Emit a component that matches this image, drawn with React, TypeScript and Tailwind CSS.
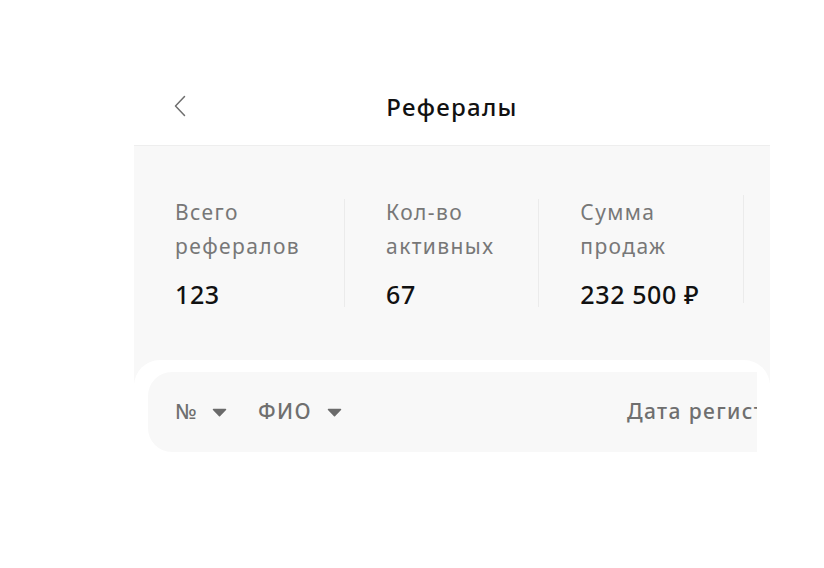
const font = { fontFamily: '"Noto Sans", "Liberation Sans", sans-serif' };

const stats = [
  { label: ['Всего', 'рефералов'], value: '123' },
  { label: ['Кол-во', 'активных'], value: '67' },
  { label: ['Сумма', 'продаж'], value: '232 500 ₽' },
];

function Caret() {
  return (
    <svg width="15" height="9" viewBox="0 0 15 9" className="shrink-0">
      <path d="M1.5 1.5 L13.5 1.5 L7.5 7.8 Z" fill="#6b6b6b" stroke="#6b6b6b" strokeWidth="1.5" strokeLinejoin="round" />
    </svg>
  );
}

function Back() {
  return (
    <svg width="12" height="22" viewBox="0 0 12 22" fill="none">
      <polyline points="10.5,1.5 1.5,11 10.5,20.5" stroke="#6e6e6e" strokeWidth="1.5" strokeLinecap="round" strokeLinejoin="round" />
    </svg>
  );
}

export default function App() {
  return (
    <div className="min-h-screen bg-white pt-[68px]" style={font}>
      <div className="ml-[134px] w-[636px] overflow-hidden">
        {/* header */}
        <div className="grid h-[77px] grid-cols-[1fr_auto_1fr] items-center">
          <div className="pl-[40px] pb-[2px]">
            <Back />
          </div>
          <h1 className="text-[24px] font-medium tracking-[1.3px] text-[#111]">Рефералы</h1>
          <div />
        </div>

        {/* stats */}
        <div className="border-t border-[#eeeeee] bg-[#f8f8f8] pb-[73px] pt-[49px]">
          <div className="flex items-start whitespace-nowrap">
            {stats.map((s, i) => (
              <div key={i} className="flex items-center">
                {i > 0 && <div className="h-[108px] w-px bg-[#ebebeb]" />}
                <div className="pl-[41px] pr-[44px]">
                  <div className="text-[21px] leading-[34px] tracking-[1.4px] text-[#777]">
                    {s.label[0]}
                    <br />
                    {s.label[1]}
                  </div>
                  <div className="mt-[15px] text-[25px] font-medium leading-[32px] tracking-[0.6px] text-[#111]">{s.value}</div>
                </div>
              </div>
            ))}
            <div className="h-[108px] w-px bg-[#ebebeb]" />
          </div>
        </div>

        {/* table head */}
        <div className="-mt-[23px] rounded-t-[26px] bg-white pl-[14px] pt-[12px]">
          <div className="mr-[13px] flex h-[80px] items-center overflow-hidden whitespace-nowrap rounded-l-[24px] bg-[#f8f8f8] pl-[27px] text-[21px] font-medium tracking-[1.4px] text-[#6f6f6f]">
            <div className="flex w-[83px] shrink-0 items-center gap-[14px]">
              <span>№</span>
              <Caret />
            </div>
            <div className="flex w-[369px] shrink-0 items-center gap-[15px]">
              <span>ФИО</span>
              <Caret />
            </div>
            <span className="shrink-0">Дата регистрации</span>
          </div>
        </div>
      </div>
    </div>
  );
}
